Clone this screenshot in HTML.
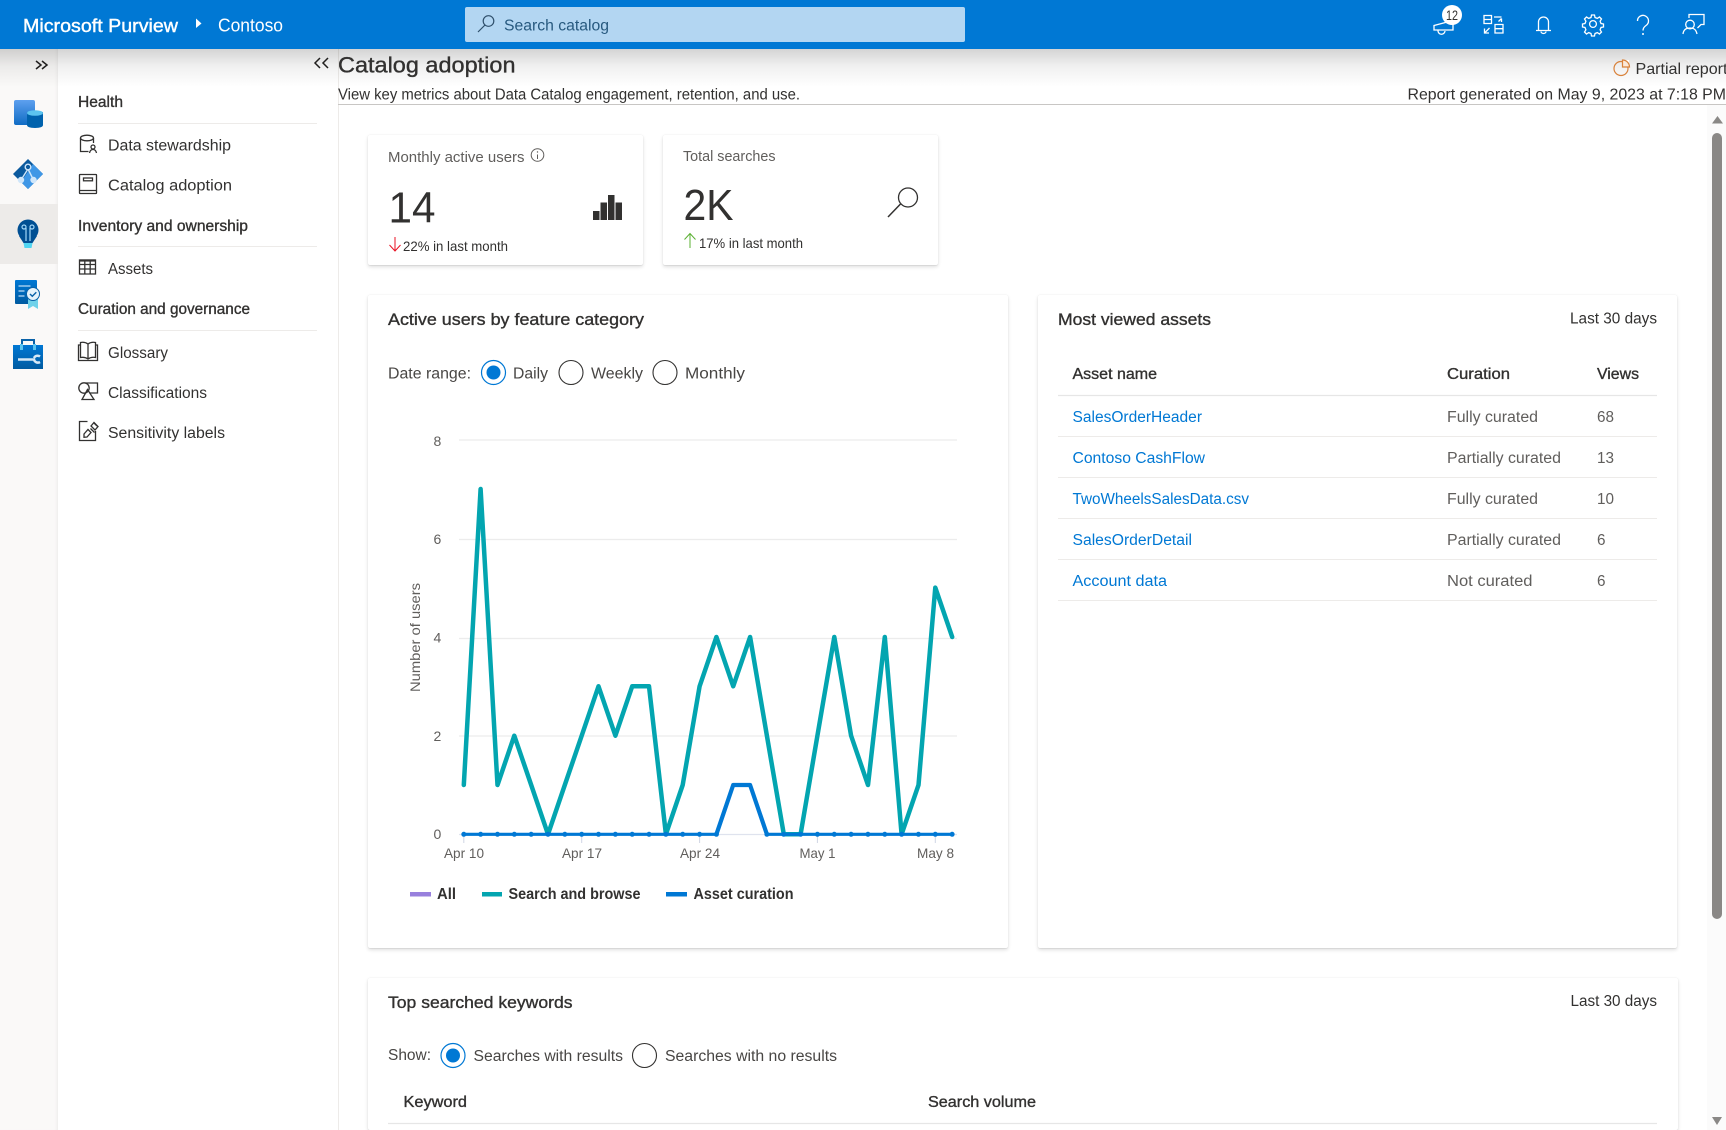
<!DOCTYPE html>
<html lang="en">
<head>
<meta charset="utf-8">
<title>Catalog adoption - Microsoft Purview</title>
<style>
html,body{margin:0;padding:0;width:1726px;height:1130px;overflow:hidden;background:#fff}
#page{position:relative;width:1726px;height:1130px;overflow:hidden;background:#fff}
.b{position:absolute}
.card{position:absolute;background:#fff;border-radius:2px;box-shadow:0 1.6px 3.6px rgba(0,0,0,.13),0 .3px .9px rgba(0,0,0,.11)}
svg{position:absolute;left:0;top:0}
text{font-family:"Liberation Sans",sans-serif;font-size:15.4px;fill:#323130}
.g{fill:#605e5c}
.d{fill:#484644}
.l{fill:#0078d4}
.sb{fill:#323130;stroke:#323130;stroke-width:.35}
.ax{font-size:14px;fill:#605e5c}
.leg{font-size:15.4px;font-weight:bold;fill:#323130}
.ic{fill:none;stroke:#323130;stroke-width:1.3}
.w{fill:none;stroke:#fff;stroke-width:1.3}
</style>
</head>
<body>
<div id="page">
<div class="b" style="left:0;top:49px;width:58px;height:1081px;background:#faf9f8;box-shadow:inset -3px 0 3px -2px rgba(0,0,0,.06)"></div>
<div class="b" style="left:0;top:204px;width:58px;height:60px;background:#edebe9"></div>
<div class="b" style="left:58px;top:49px;width:280px;height:1081px;background:#fff;border-right:1px solid #edebe9"></div>
<div class="b" style="left:338px;top:104px;width:1388px;height:1px;background:#c8c6c4"></div>
<div class="b" style="left:1707px;top:105px;width:19px;height:1025px;background:#fbfbfb"></div>
<div class="b" style="left:1712px;top:133px;width:10px;height:786px;background:#8a8886;border-radius:5px"></div>
<div class="card" style="left:368px;top:135px;width:275px;height:130px"></div>
<div class="card" style="left:663px;top:135px;width:275px;height:130px"></div>
<div class="card" style="left:368px;top:295px;width:640px;height:653px"></div>
<div class="card" style="left:1038px;top:295px;width:639px;height:653px"></div>
<div class="card" style="left:368px;top:978px;width:1310px;height:152px"></div>
<div class="b" style="left:0;top:49px;width:1726px;height:38px;background:linear-gradient(to bottom,rgba(0,0,0,.17),rgba(0,0,0,.06) 45%,rgba(0,0,0,0))"></div>
<div class="b" style="left:0;top:0;width:1726px;height:49px;background:#0078d4"></div>
<div class="b" style="left:465px;top:7px;width:500px;height:35px;background:#b3d6f2;border-radius:2px"></div>

<svg width="1726" height="1130" viewBox="0 0 1726 1130" xmlns="http://www.w3.org/2000/svg">
<defs>
<linearGradient id="gb" x1="0" y1="0" x2="0" y2="1"><stop offset="0" stop-color="#5ea0ef"/><stop offset="1" stop-color="#0f6cc4"/></linearGradient>
<linearGradient id="gc" x1="0" y1="0" x2="0" y2="1"><stop offset="0" stop-color="#0078d4"/><stop offset="1" stop-color="#005ba1"/></linearGradient>
</defs>

<!-- top bar -->
<text x="23" y="32" textLength="155" lengthAdjust="spacingAndGlyphs" style="font-size:18.5px;fill:#fff;stroke:#fff;stroke-width:.4">Microsoft Purview</text>
<path d="M196 18.500L201.500 23.500L196 28z" fill="#fff"/>
<text x="218" y="31.500" textLength="65" lengthAdjust="spacingAndGlyphs" style="font-size:18px;fill:#fff">Contoso</text>
<g fill="none" stroke="#2f4f6b" stroke-width="1.200"><circle cx="488.500" cy="21" r="5.300"/><path d="M485 25L478 32"/></g>
<text x="504" y="30.500" textLength="105" lengthAdjust="spacingAndGlyphs" style="font-size:15.4px;fill:#27597f">Search catalog</text>

<!-- header icons -->
<g class="w">
<path d="M1434 25.500L1453 20.500V30L1434 30z"/><path d="M1438 30.500a3.500 3.500 0 0 0 7 .5"/>
<path d="M1484 15.500h7.500v8h-7.500zM1484 19.500h7.500"/><path d="M1494 17h7.500M1498.500 21.500l3-3M1501.500 18.500v3.500"/>
<path d="M1484.500 33l5-5M1484.500 28.500v4.500h4.500"/><path d="M1495 24.500h8v8.500h-8zM1495 28.700h8"/>
<path d="M1538.500 30V22a5 5 0 0 1 10 0V30M1536 30.500H1551"/><path d="M1541 31.500a2.500 2 0 0 0 5 0"/>
<circle cx="1593" cy="24" r="3.400"/>
<path d="M1591.500 15h3l.5 2.500 2.300.9 2.200-1.400 2 2-1.400 2.200.9 2.300 2.500.5v3l-2.500.5-.9 2.300 1.400 2.200-2 2-2.200-1.400-2.300.9-.5 2.500h-3l-.5-2.500-2.300-.9-2.200 1.400-2-2 1.400-2.200-.9-2.300-2.500-.5v-3l2.500-.5.9-2.300-1.400-2.200 2-2 2.200 1.400 2.300-.9z"/>
<path d="M1637.500 21a5.500 5.500 0 1 1 8.500 4.500c-2 1.400-3 2.500-3 5"/>
<circle cx="1690" cy="24.500" r="4.300"/><path d="M1683 34c.5-4.500 3-6 7-6s6 1.500 7 6"/>
<path d="M1689 18v-3.500h15v10h-3l-3.500 3.500"/>
</g>
<circle cx="1643" cy="34" r="1" fill="#fff"/>
<circle cx="1452" cy="15" r="10" fill="#fff"/>
<text x="1446" y="20" textLength="12" lengthAdjust="spacingAndGlyphs" style="font-size:13.500px;fill:#323130">12</text>

<!-- rail -->
<path d="M36 69l5-4-5-4M42 69l5-4-5-4" fill="none" stroke="#201f1e" stroke-width="1.500"/>
<path d="M320 58l-5 5 5 5M328 58l-5 5 5 5" fill="none" stroke="#201f1e" stroke-width="1.500"/>
<rect x="14" y="100" width="21" height="25" rx="2" fill="url(#gb)"/>
<path d="M27 112h16v13c0 2-3.500 3-8 3s-8-1-8-3z" fill="#0062ad"/>
<ellipse cx="35" cy="113" rx="8" ry="2.800" fill="#5cc4ef"/>
<path d="M28 159L43 174L28 189L13 174z" fill="#0b5a9e"/>
<path d="M33 164L43 174L28 189L21 182z" fill="#3f97e6"/>
<g stroke="#cfe6fa" stroke-width="1.400"><path d="M28 169L21 180M28 169L33 179" fill="none"/><circle cx="28" cy="167" r="2.800" fill="#0b5a9e"/><circle cx="21" cy="180" r="2.500" fill="#cfe6fa"/><circle cx="33.500" cy="180" r="2.500" fill="#cfe6fa"/></g>
<circle cx="28" cy="230" r="10.500" fill="#004f93"/>
<path d="M19 236L23.500 243H32.500L37 236z" fill="#004f93"/>
<path d="M23.500 243h9l-1 5h-7z" fill="#50d5f2"/>
<g fill="none" stroke="#9fd5f7" stroke-width="1.200"><circle cx="24" cy="227" r="2"/><circle cx="32" cy="227" r="2"/><path d="M26 228V241M30 228V241"/></g>
<rect x="15" y="280" width="22" height="24" rx="1" fill="url(#gc)"/>
<g stroke="#bcdcf5" stroke-width="1.300"><path d="M18.500 286h12M18.500 291h6M18.500 296h6"/></g>
<path d="M28 298v11l5-3 5 3v-11z" fill="#6fd2ea"/>
<circle cx="33" cy="294" r="6.500" fill="#e5f3fb" stroke="#0a62a8"/>
<path d="M30 294l2.300 2.300 4-4" fill="none" stroke="#0a62a8" stroke-width="1.400"/>
<path d="M22 345v-5h12v5" fill="none" stroke="#0a62a8" stroke-width="2"/>
<rect x="13" y="345" width="30" height="24" fill="url(#gc)"/>
<rect x="20" y="344" width="3" height="6" fill="#5cc4ef"/><rect x="33" y="344" width="3" height="6" fill="#5cc4ef"/>
<path d="M18 359.500H34a4 4 0 0 0 6 2.500M40 356.500a4 4 0 0 0-6 1.500" fill="none" stroke="#d6e8f6" stroke-width="2.500"/>

<!-- nav -->
<text x="78" y="107" textLength="45" lengthAdjust="spacingAndGlyphs" class="sb">Health</text>
<path d="M78 123.500H317M78 246.500H317M78 330.500H317" stroke="#edebe9" stroke-width="1"/>
<text x="108" y="150.500" textLength="123" lengthAdjust="spacingAndGlyphs">Data stewardship</text>
<text x="108" y="190.500" textLength="124" lengthAdjust="spacingAndGlyphs">Catalog adoption</text>
<text x="78" y="231" textLength="170" lengthAdjust="spacingAndGlyphs" class="sb">Inventory and ownership</text>
<text x="108" y="274" textLength="45" lengthAdjust="spacingAndGlyphs">Assets</text>
<text x="78" y="314" textLength="172" lengthAdjust="spacingAndGlyphs" class="sb">Curation and governance</text>
<text x="108" y="358" textLength="60" lengthAdjust="spacingAndGlyphs">Glossary</text>
<text x="108" y="398" textLength="99" lengthAdjust="spacingAndGlyphs">Classifications</text>
<text x="108" y="438" textLength="117" lengthAdjust="spacingAndGlyphs">Sensitivity labels</text>
<g class="ic">
<path d="M80.500 138v13.500h8M93.500 138v5"/><ellipse cx="87" cy="138" rx="6.500" ry="2.800"/><circle cx="93" cy="147" r="2"/><path d="M89.500 153c.5-2.500 2-3.500 3.500-3.500s3 1 3.500 3.500"/>
<rect x="79.500" y="174.500" width="17" height="19" rx=".5"/><path d="M79.500 190.500h17"/><rect x="83.500" y="178" width="9" height="2.800"/>
<path d="M79.500 260h16v14h-16zM79.500 264.500h16M79.500 269h16M84.800 260v14M90.200 260v14"/><path d="M79.500 260.500h16" stroke-width="2.200"/>
<path d="M88 344c-2.500-1.800-5-2-7.500-1.500v15c3-.5 5-.3 7.500 1.500 2.500-1.800 5-2 7.500-1.500v-15c-2.500-.5-5-.3-7.500 1.500zM88 344v15"/><path d="M80.500 345h-2v15.500h19V345h-2"/>
<circle cx="84" cy="388" r="5.200"/><path d="M85.500 383h12v10h-8"/><path d="M87.500 389.500l-5.500 10h12z"/>
<path d="M95.500 431v9.500h-16v-19h8"/><path d="M84 434l4-4.500 3 3-4 4.500-3 .3zM90.500 428.500l4 4M91 426l3-3.500 4 4-3 3.500zM94 423l3 3"/>
</g>

<!-- page header -->
<text x="338" y="72.500" textLength="177.500" lengthAdjust="spacingAndGlyphs" style="font-size:22px;stroke:#323130;stroke-width:.35">Catalog adoption</text>
<text x="338" y="99.500" textLength="462" lengthAdjust="spacingAndGlyphs">View key metrics about Data Catalog engagement, retention, and use.</text>
<circle cx="1621" cy="68.500" r="7" fill="none" stroke="#d9823b" stroke-width="1.200"/>
<path d="M1622.500 60h6.500v7h-6.500z" fill="#fff" stroke="none"/>
<path d="M1622.500 60a7 7 0 0 1 7 7h-7z" fill="#fbe9d9" stroke="#d9823b" stroke-width="1.200"/>
<text x="1635.500" y="74" textLength="92" lengthAdjust="spacingAndGlyphs" style="font-size:15.800px">Partial report</text>
<text x="1407.500" y="99.500" textLength="318.500" lengthAdjust="spacingAndGlyphs" style="font-size:15.800px">Report generated on May 9, 2023 at 7:18 PM</text>

<!-- scroll arrows -->
<path d="M1712 123.500L1717.500 116L1723 123.500z" fill="#8a8886"/>
<path d="M1712 1117L1717 1125L1722 1117z" fill="#8a8886"/>

<!-- KPI cards -->
<text x="388" y="162" textLength="136.500" lengthAdjust="spacingAndGlyphs" class="g" style="font-size:14.500px">Monthly active users</text>
<circle cx="537.500" cy="155" r="6.300" fill="none" stroke="#605e5c" stroke-width="1"/>
<path d="M537.500 154.500V159" stroke="#605e5c" stroke-width="1"/><circle cx="537.500" cy="152" r=".7" fill="#605e5c"/>
<text x="388.500" y="222.500" textLength="47" lengthAdjust="spacingAndGlyphs" style="font-size:44px">14</text>
<g fill="#323130"><rect x="593" y="211" width="6.500" height="9"/><rect x="600.500" y="202.500" width="6.500" height="17.500"/><rect x="608" y="195" width="6.500" height="25"/><rect x="615.500" y="202.500" width="6.500" height="17.500"/></g>
<path d="M395 237V250.500M389.500 245l5.500 6 5.500-6" fill="none" stroke="#e81123" stroke-width="1"/>
<text x="403" y="251" textLength="105" lengthAdjust="spacingAndGlyphs" style="font-size:14px">22% in last month</text>
<text x="683" y="161" textLength="92.500" lengthAdjust="spacingAndGlyphs" class="g" style="font-size:14.500px">Total searches</text>
<text x="683.500" y="220" textLength="50" lengthAdjust="spacingAndGlyphs" style="font-size:44px">2K</text>
<circle cx="908" cy="197.500" r="9.500" fill="none" stroke="#323130" stroke-width="1.300"/>
<path d="M900.500 204L888 217" fill="none" stroke="#323130" stroke-width="1.500"/>
<path d="M690 248V234M684.500 239.500l5.500-6 5.500 6" fill="none" stroke="#5bb033" stroke-width="1"/>
<text x="699" y="248" textLength="104" lengthAdjust="spacingAndGlyphs" style="font-size:14px">17% in last month</text>

<!-- active users panel -->
<text x="388" y="325" textLength="256" lengthAdjust="spacingAndGlyphs" class="sb" style="font-size:16.500px">Active users by feature category</text>
<text x="388" y="378.500" textLength="83" lengthAdjust="spacingAndGlyphs" class="d">Date range:</text>
<circle cx="493.500" cy="372.500" r="12" fill="#fff" stroke="#0078d4" stroke-width="1.200"/><circle cx="493.500" cy="372.500" r="7" fill="#0078d4"/>
<text x="513" y="378.500" textLength="35" lengthAdjust="spacingAndGlyphs" class="d">Daily</text>
<circle cx="571" cy="372.500" r="12" fill="#fff" stroke="#323130" stroke-width="1.100"/>
<text x="591" y="378.500" textLength="52" lengthAdjust="spacingAndGlyphs" class="d">Weekly</text>
<circle cx="665" cy="372.500" r="12" fill="#fff" stroke="#323130" stroke-width="1.100"/>
<text x="685" y="378.500" textLength="60" lengthAdjust="spacingAndGlyphs" class="d">Monthly</text>

<!-- chart -->
<path d="M459 440H957M459 539.500H957M459 638.500H957M459 736H957" stroke="#ececec" stroke-width="1.300"/>
<path d="M459 834.500H957" stroke="#dfe3ee" stroke-width="1.300"/>
<path d="M463.800 835V843M581.700 835V843M699.600 835V843M817.400 835V843M935.300 835V843" stroke="#cfd5e4" stroke-width="1"/>
<text x="433.500" y="446" class="ax">8</text>
<text x="433.500" y="544" class="ax">6</text>
<text x="433.500" y="642.500" class="ax">4</text>
<text x="433.500" y="741" class="ax">2</text>
<text x="433.500" y="839" class="ax">0</text>
<text x="444" y="858" textLength="40" lengthAdjust="spacingAndGlyphs" class="ax">Apr 10</text>
<text x="562" y="858" textLength="40" lengthAdjust="spacingAndGlyphs" class="ax">Apr 17</text>
<text x="680" y="858" textLength="40" lengthAdjust="spacingAndGlyphs" class="ax">Apr 24</text>
<text x="799.500" y="858" textLength="36" lengthAdjust="spacingAndGlyphs" class="ax">May 1</text>
<text x="917" y="858" textLength="37" lengthAdjust="spacingAndGlyphs" class="ax">May 8</text>
<text transform="translate(420,692) rotate(-90)" textLength="109" lengthAdjust="spacingAndGlyphs" class="ax">Number of users</text>
<polyline fill="none" stroke="#03a5b0" stroke-width="4.500" stroke-linejoin="round" stroke-linecap="round" points="463.800,785 480.600,489 497.500,785 514.300,735.700 531.200,785 548,834.300 564.800,785 581.700,735.700 598.500,686.300 615.400,735.700 632.200,686.300 649,686.300 665.900,834.300 682.700,785 699.600,686.300 716.400,637 733.200,686.300 750.100,637 766.900,735.700 783.800,834.300 800.600,834.300 817.400,735.700 834.300,637 851.100,735.700 868,785 884.800,637 901.600,834.300 918.500,785 935.300,587.600 952.200,637"/>
<polyline fill="none" stroke="#0078d4" stroke-width="3.200" stroke-linejoin="round" stroke-linecap="round" points="463.800,834.300 716.400,834.300 733.200,785 750.100,785 766.900,834.300 952.200,834.300"/>
<polyline fill="none" stroke="#0078d4" stroke-width="4.200" stroke-linejoin="round" stroke-linecap="round" points="716.400,834.300 733.200,785 750.100,785 766.900,834.300"/>
<path d="M463.800 834.300H717M766.900 834.300H953" fill="none" stroke="#0078d4" stroke-width="5" stroke-linecap="round" stroke-dasharray="0 16.840"/>
<rect x="410" y="892" width="21" height="4.500" fill="#9880dd"/>
<text x="437" y="899" textLength="19" lengthAdjust="spacingAndGlyphs" class="leg">All</text>
<rect x="482" y="892" width="20" height="4.500" fill="#03a5b0"/>
<text x="508.500" y="899" textLength="132" lengthAdjust="spacingAndGlyphs" class="leg">Search and browse</text>
<rect x="666" y="892" width="21" height="4.500" fill="#0078d4"/>
<text x="693.500" y="899" textLength="100" lengthAdjust="spacingAndGlyphs" class="leg">Asset curation</text>

<!-- most viewed assets -->
<text x="1058" y="325" textLength="153" lengthAdjust="spacingAndGlyphs" class="sb" style="font-size:16.500px">Most viewed assets</text>
<text x="1570" y="323.500" textLength="87" lengthAdjust="spacingAndGlyphs">Last 30 days</text>
<text x="1072.500" y="379" textLength="84.500" lengthAdjust="spacingAndGlyphs" class="sb">Asset name</text>
<text x="1447" y="379" textLength="63" lengthAdjust="spacingAndGlyphs" class="sb">Curation</text>
<text x="1597" y="379" textLength="42" lengthAdjust="spacingAndGlyphs" class="sb">Views</text>
<path d="M1058 395.500H1657" stroke="#e6e6e6" stroke-width="1.300"/>
<path d="M1058 436.500H1657M1058 477.500H1657M1058 518.500H1657M1058 559.500H1657M1058 600.500H1657" stroke="#edebe9" stroke-width="1"/>
<text x="1072.500" y="422" textLength="129.500" lengthAdjust="spacingAndGlyphs" class="l">SalesOrderHeader</text>
<text x="1447" y="422" textLength="91" lengthAdjust="spacingAndGlyphs" class="g">Fully curated</text>
<text x="1597" y="422" textLength="17" lengthAdjust="spacingAndGlyphs" class="g">68</text>
<text x="1072.500" y="463" textLength="132.500" lengthAdjust="spacingAndGlyphs" class="l">Contoso CashFlow</text>
<text x="1447" y="463" textLength="114" lengthAdjust="spacingAndGlyphs" class="g">Partially curated</text>
<text x="1597" y="463" textLength="17" lengthAdjust="spacingAndGlyphs" class="g">13</text>
<text x="1072.500" y="504" textLength="176.500" lengthAdjust="spacingAndGlyphs" class="l">TwoWheelsSalesData.csv</text>
<text x="1447" y="504" textLength="91" lengthAdjust="spacingAndGlyphs" class="g">Fully curated</text>
<text x="1597" y="504" textLength="17" lengthAdjust="spacingAndGlyphs" class="g">10</text>
<text x="1072.500" y="545" textLength="119.500" lengthAdjust="spacingAndGlyphs" class="l">SalesOrderDetail</text>
<text x="1447" y="545" textLength="114" lengthAdjust="spacingAndGlyphs" class="g">Partially curated</text>
<text x="1597" y="545" textLength="8.500" lengthAdjust="spacingAndGlyphs" class="g">6</text>
<text x="1072.500" y="586" textLength="94.500" lengthAdjust="spacingAndGlyphs" class="l">Account data</text>
<text x="1447" y="586" textLength="85.500" lengthAdjust="spacingAndGlyphs" class="g">Not curated</text>
<text x="1597" y="586" textLength="8.500" lengthAdjust="spacingAndGlyphs" class="g">6</text>

<!-- top keywords -->
<text x="388" y="1008" textLength="184.500" lengthAdjust="spacingAndGlyphs" class="sb" style="font-size:16.500px">Top searched keywords</text>
<text x="1570.500" y="1006" textLength="86.500" lengthAdjust="spacingAndGlyphs">Last 30 days</text>
<text x="388" y="1060" textLength="43" lengthAdjust="spacingAndGlyphs" class="d">Show:</text>
<circle cx="453" cy="1055.500" r="12" fill="#fff" stroke="#0078d4" stroke-width="1.200"/><circle cx="453" cy="1055.500" r="7" fill="#0078d4"/>
<text x="473.500" y="1061" textLength="149.500" lengthAdjust="spacingAndGlyphs" class="d">Searches with results</text>
<circle cx="644.500" cy="1055.500" r="12" fill="#fff" stroke="#323130" stroke-width="1.100"/>
<text x="665" y="1061" textLength="172" lengthAdjust="spacingAndGlyphs" class="d">Searches with no results</text>
<text x="403.500" y="1107" textLength="63.500" lengthAdjust="spacingAndGlyphs" class="sb">Keyword</text>
<text x="928" y="1107" textLength="108" lengthAdjust="spacingAndGlyphs" class="sb">Search volume</text>
<path d="M388 1123.500H1657" stroke="#e6e6e6" stroke-width="1.300"/>
</svg>
</div>
</body>
</html>
